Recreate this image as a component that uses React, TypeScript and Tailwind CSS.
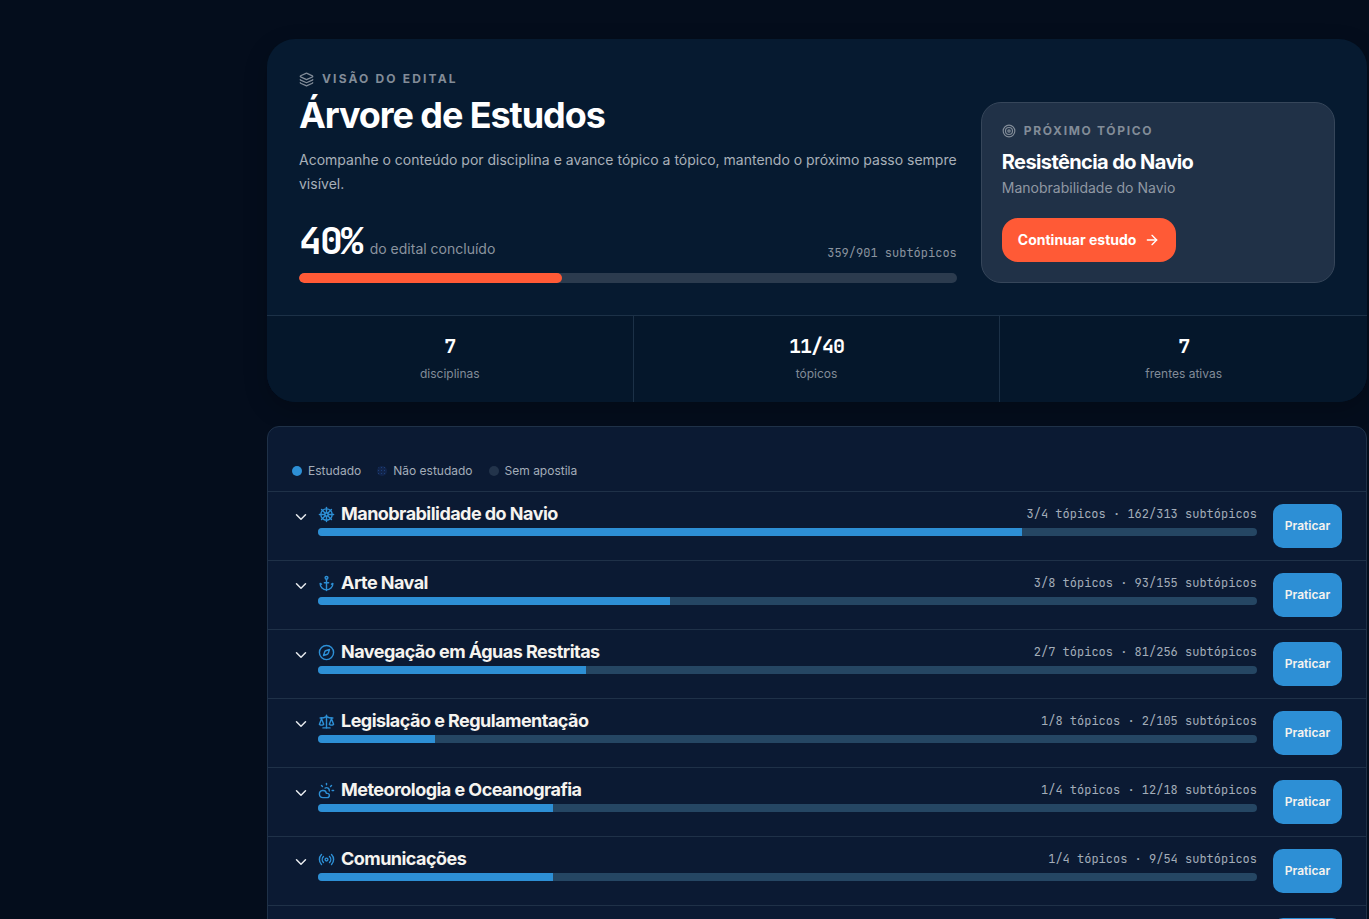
import {
  ArrowRight,
  Anchor,
  ChevronDown,
  CloudSun,
  Compass,
  Languages,
  Layers,
  Radio,
  Scale,
  ShipWheel,
  Target,
  type LucideIcon,
} from "lucide-react";

interface Discipline {
  name: string;
  icon: LucideIcon;
  topics: [number, number];
  subtopics: [number, number];
}

const DISCIPLINES: Discipline[] = [
  { name: "Manobrabilidade do Navio", icon: ShipWheel, topics: [3, 4], subtopics: [162, 313] },
  { name: "Arte Naval", icon: Anchor, topics: [3, 8], subtopics: [93, 155] },
  { name: "Navegação em Águas Restritas", icon: Compass, topics: [2, 7], subtopics: [81, 256] },
  { name: "Legislação e Regulamentação", icon: Scale, topics: [1, 8], subtopics: [2, 105] },
  { name: "Meteorologia e Oceanografia", icon: CloudSun, topics: [1, 4], subtopics: [12, 18] },
  { name: "Comunicações", icon: Radio, topics: [1, 4], subtopics: [9, 54] },
  { name: "Inglês", icon: Languages, topics: [0, 5], subtopics: [0, 0] },
];

const STATS = [
  { value: "7", label: "disciplinas" },
  { value: "11/40", label: "tópicos" },
  { value: "7", label: "frentes ativas" },
];

function NextTopicCard() {
  return (
    <aside className="self-end rounded-[20px] border border-[#36465a] bg-[#203147] p-5">
      <p className="flex items-center gap-2 text-xs font-bold uppercase tracking-[0.14em] text-[#828c98]">
        <Target size={14} className="shrink-0" />
        Próximo tópico
      </p>
      <h2 className="mt-[9px] text-xl font-bold leading-7 tracking-[-0.03em] text-white">Resistência do Navio</h2>
      <p className="text-sm leading-6 text-[#9098a3]">Manobrabilidade do Navio</p>
      <button
        type="button"
        className="mt-[18px] inline-flex h-11 items-center gap-2 rounded-2xl bg-[#ff5a36] px-4 text-sm font-bold text-white"
      >
        Continuar estudo
        <ArrowRight size={16} />
      </button>
    </aside>
  );
}

function Hero() {
  const percent = 40;

  return (
    <section className="overflow-hidden rounded-[28px] bg-[#061a30] shadow-[0_8px_24px_rgba(0,0,0,0.2)]">
      <div className="grid grid-cols-[1.3fr_0.7fr] gap-6 p-8">
        <div className="min-w-0">
          <p className="flex items-center gap-2 text-xs font-bold uppercase tracking-[0.18em] text-[#828c98]">
            <Layers size={15} className="shrink-0" />
            Visão do edital
          </p>
          <h1 className="mt-2 text-4xl font-bold leading-10 tracking-[-0.03em] text-white">Árvore de Estudos</h1>
          <p className="mt-[13px] text-sm leading-6 text-[#a8b0b9]">
            Acompanhe o conteúdo por disciplina e avance tópico a tópico, mantendo o próximo passo sempre visível.
          </p>

          <div className="mt-[23px] flex items-end justify-between gap-4">
            <div className="flex items-baseline gap-2">
              <span className="font-['JetBrains_Mono','DejaVu_Sans_Mono',monospace] text-[38px] font-bold leading-[42px] tracking-tighter text-white">
                {percent}%
              </span>
              <span className="text-sm text-[#8b949f]">do edital concluído</span>
            </div>
            <span className="font-['JetBrains_Mono','DejaVu_Sans_Mono',monospace] text-xs text-[#8b949f]">
              359/901 subtópicos
            </span>
          </div>
          <div className="mt-3 h-[10px] overflow-hidden rounded-full bg-[#2b3b4e]">
            <div className="h-full rounded-full bg-[#ff5a36]" style={{ width: `${percent}%` }} />
          </div>
        </div>

        <NextTopicCard />
      </div>

      <dl className="grid grid-cols-3 divide-x divide-[#1c3147] border-t border-[#1c3147] bg-[#05172b]">
        {STATS.map((stat) => (
          <div key={stat.label} className="flex flex-col-reverse gap-1 pb-[18px] pt-4 text-center">
            <dt className="text-xs leading-5 text-[#828c98]">{stat.label}</dt>
            <dd className="font-['JetBrains_Mono','DejaVu_Sans_Mono',monospace] text-xl font-bold tracking-tighter text-white">
              {stat.value}
            </dd>
          </div>
        ))}
      </dl>
    </section>
  );
}

function Legend() {
  return (
    <ul className="flex items-center gap-4 border-b border-[#1f3148] px-6 pb-3 pt-9 text-xs leading-4 text-[#a3adb9]">
      <li className="flex items-center gap-[6px]">
        <span className="size-[10px] rounded-full bg-[#2d8fd5]" />
        Estudado
      </li>
      <li className="flex items-center gap-[6px]">
        <span className="size-[10px] rounded-full bg-[#11244a] bg-[radial-gradient(#1d3f78_1px,transparent_1px)] bg-[length:3px_3px]" />
        Não estudado
      </li>
      <li className="flex items-center gap-[6px]">
        <span className="size-[10px] rounded-full bg-[#23344b]" />
        Sem apostila
      </li>
    </ul>
  );
}

function DisciplineRow({ discipline }: { discipline: Discipline }) {
  const { name, icon: Icon, topics, subtopics } = discipline;
  const percent = (topics[0] / topics[1]) * 100;

  return (
    <li className="flex items-start gap-4 border-b border-[#1f3148] px-6 py-3">
      <button type="button" aria-expanded={false} className="flex min-w-0 flex-1 items-start gap-2 text-left">
        <ChevronDown size={18} className="mt-1 shrink-0 text-[#e6e9ed]" />
        <span className="block min-w-0 flex-1">
          <span className="flex h-5 items-center gap-[6px]">
            <Icon size={17} className="shrink-0 text-[#2d8fd5]" />
            <span className="flex-1 truncate text-lg font-bold leading-6 tracking-[-0.03em] text-[#f5f3ef]">{name}</span>
            <span className="font-['JetBrains_Mono','DejaVu_Sans_Mono',monospace] text-xs text-[#a3adb9]">
              {topics[0]}/{topics[1]} tópicos · {subtopics[0]}/{subtopics[1]} subtópicos
            </span>
          </span>
          <span className="mt-1 block h-2 overflow-hidden rounded-full bg-[#254663]">
            <span className="block h-full bg-[#2d8fd5]" style={{ width: `${percent}%` }} />
          </span>
        </span>
      </button>
      <button
        type="button"
        className="h-11 w-[69px] shrink-0 rounded-[10px] bg-[#2d8fd5] text-xs font-semibold text-[#f5f3ef]"
      >
        Praticar
      </button>
    </li>
  );
}

export default function App() {
  return (
    <main className="min-h-screen bg-[#040d1c] pb-10 pl-[267px] pr-[2px] pt-[39px] font-['Inter',sans-serif]">
      <Hero />
      <section className="mt-6 overflow-hidden rounded-xl border border-[#1f3148] bg-[#0b1a33]">
        <Legend />
        <ul>
          {DISCIPLINES.map((discipline) => (
            <DisciplineRow key={discipline.name} discipline={discipline} />
          ))}
        </ul>
      </section>
    </main>
  );
}
